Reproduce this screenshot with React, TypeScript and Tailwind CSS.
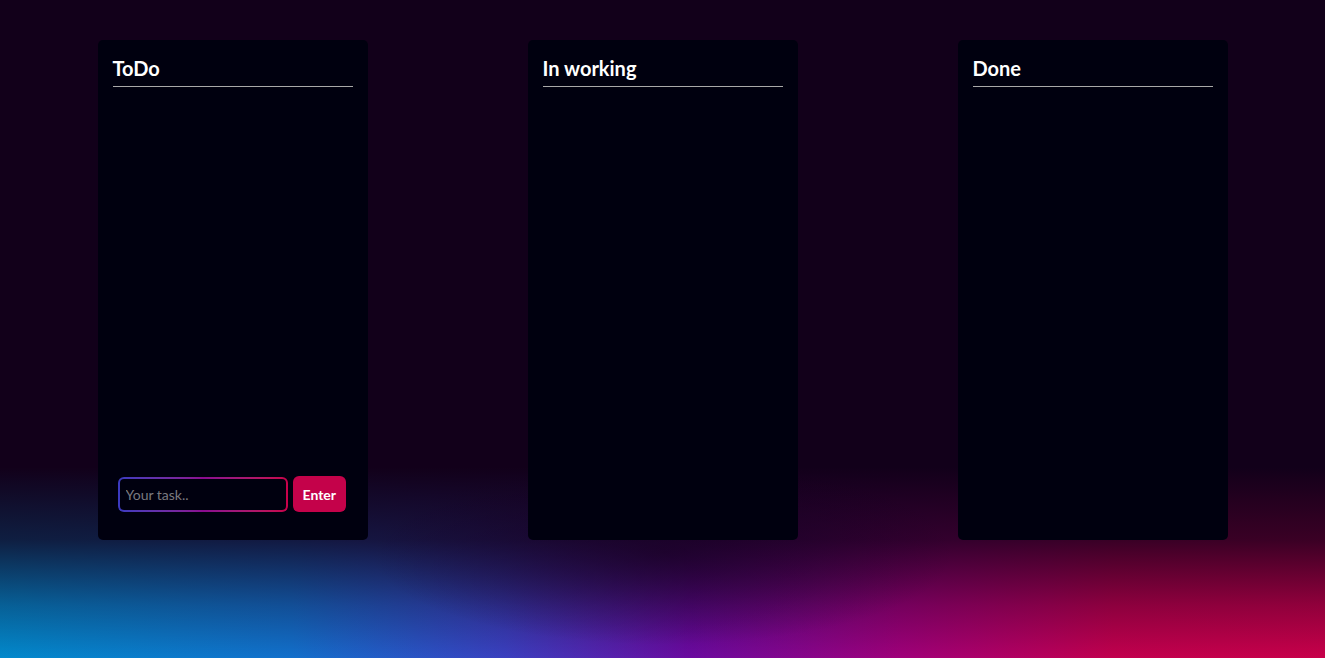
import { useState } from 'react';

const columns = ['ToDo', 'In working', 'Done'];

function Column({ title, children }: { title: string; children?: React.ReactNode }) {
  return (
    <div className="flex flex-col w-[270px] h-[500px] bg-[#00000f] rounded-[5px] px-[15px] pt-[14px] pb-[28px]">
      <h2 className="text-white text-[20px] font-bold leading-[28px] pb-[4px] border-b border-[#a8a8a8]">
        {title}
      </h2>
      <div className="flex-1" />
      {children}
    </div>
  );
}

export default function App() {
  const [task, setTask] = useState('');

  return (
    <div className="min-h-screen w-full font-['Lato',sans-serif] bg-[#12001a] bg-[radial-gradient(ellipse_22%_14%_at_50%_84%,rgba(18,0,26,0.55)_0%,rgba(18,0,26,0)_100%),linear-gradient(to_bottom,#12001a_0%,#12001a_71%,rgba(18,0,26,0.78)_82%,rgba(18,0,26,0.3)_92%,rgba(18,0,26,0)_100%),linear-gradient(to_right,#0289cc_0%,#1270cc_22%,#3a40c0_38%,#6a0aa0_52%,#a0007a_68%,#c2004e_84%,#c8004a_100%)]">
      <div className="flex justify-center gap-[160px] pt-[40px] h-[658px]">
        {columns.map((c) =>
          c === 'ToDo' ? (
            <Column key={c} title={c}>
              {/* add task */}
              <div className="flex items-center gap-[5px] pl-[5px]">
                <div className="rounded-[6px] p-[2px] bg-gradient-to-r from-[#3a3ac0] via-[#8a0a90] to-[#c8004a]">
                  <input
                    value={task}
                    onChange={(e) => setTask(e.target.value)}
                    placeholder="Your task.."
                    className="w-[166px] h-[31px] rounded-[4px] bg-[#00000f] px-[6px] text-[14px] text-white placeholder:text-[#7a7a80] outline-none"
                  />
                </div>
                <button className="h-[36px] px-[10px] rounded-[6px] bg-[#c4024a] text-white text-[14px] font-bold">
                  Enter
                </button>
              </div>
            </Column>
          ) : (
            <Column key={c} title={c} />
          )
        )}
      </div>
    </div>
  );
}
